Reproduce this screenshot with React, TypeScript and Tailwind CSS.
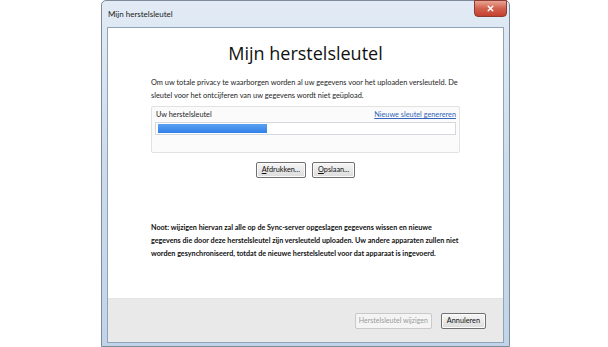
import { X } from 'lucide-react';

const font = { fontFamily: 'Lato, "Open Sans", sans-serif' };

function WinButton({ children, disabled = false }: { children: React.ReactNode; disabled?: boolean }) {
  return (
    <button
      type="button"
      className={
        disabled
          ? 'h-[16px] rounded-[2px] border border-[#c9c9c9] bg-[#f4f4f4] px-[3px] text-[7px] leading-none text-[#9a9a9a]'
          : 'h-[16px] rounded-[2px] border border-[#707070] bg-gradient-to-b from-[#f6f6f6] to-[#dcdcdc] px-[5px] text-[7.3px] leading-none text-[#111] shadow-[inset_0_0_0_1px_#fbfbfb]'
      }
    >
      {children}
    </button>
  );
}

export default function App() {
  return (
    <div className="h-[347px] w-[608px] bg-white" style={font}>
      <div className="ml-[101px] flex h-[347px] w-[409px] flex-col rounded-t-[5px] border border-[#7d8a99] bg-gradient-to-b from-[#e2ebf5] via-[#cbdbeb] to-[#c2d4e8] px-[5px] pb-[3px]">
        <div className="relative flex h-[26px] shrink-0 items-center">
          <span className="pl-[1px] text-[8px] text-[#1a1a1a]">Mijn herstelsleutel</span>
          <div className="absolute right-[-3px] top-[-1px] flex h-[17px] w-[33px] items-center justify-center rounded-b-[4px] border border-[#8d3b34] bg-gradient-to-b from-[#e8a493] via-[#d2604e] to-[#c4402f]">
            <X size={9} strokeWidth={4} className="text-white" />
          </div>
        </div>

        <div className="flex flex-1 flex-col border border-[#8fa3b9] bg-white">
          <div className="flex flex-1 flex-col px-[43px]">
            <h1
              className="mt-[9px] text-center text-[18px] font-normal leading-[32px] text-[#111]"
              style={{ fontFamily: '"Open Sans", sans-serif' }}
            >
              Mijn herstelsleutel
            </h1>
            <p className="mt-[7px] text-[7.4px] leading-[13px] text-[#1e1e1e]">
              Om uw totale privacy te waarborgen worden al uw gegevens voor het uploaden versleuteld. De sleutel
              voor het ontcijferen van uw gegevens wordt niet geüpload.
            </p>

            <div className="mt-[4px] h-[47px] rounded-[2px] border border-[#e2e2e2] bg-[#fbfbfb] px-[3px]">
              <div className="flex items-center justify-between pt-[1px] text-[7.3px] leading-[14px]">
                <span className="pl-[1px] text-[#1e1e1e]">Uw herstelsleutel</span>
                <span className="text-[#3465b8] underline">Nieuwe sleutel genereren</span>
              </div>
              <div className="flex h-[13px] items-center border border-[#d5d9de] bg-white px-[2px]">
                <div className="h-[9px] w-[109px] bg-gradient-to-b from-[#5aa2f2] to-[#2f7fe6]" />
              </div>
            </div>

            <div className="mt-[9px] flex justify-center gap-[6px]">
              <WinButton>
                <span className="underline">A</span>fdrukken...
              </WinButton>
              <WinButton>
                <span className="underline">O</span>pslaan...
              </WinButton>
            </div>

            <p className="mt-[43px] whitespace-nowrap text-[7.2px] font-bold leading-[13px] text-[#111]">
              Noot: wijzigen hiervan zal alle op de Sync-server opgeslagen gegevens wissen en nieuwe
              <br />
              gegevens die door deze herstelsleutel zijn versleuteld uploaden. Uw andere apparaten zullen niet
              <br />
              worden gesynchroniseerd, totdat de nieuwe herstelsleutel voor dat apparaat is ingevoerd.
            </p>
          </div>

          <div className="flex h-[44px] shrink-0 items-center justify-end gap-[9px] border-t border-[#e4e4e4] bg-[#e9e9e9] pr-[17px]">
            <WinButton disabled>Herstelsleutel wijzigen</WinButton>
            <WinButton>Annuleren</WinButton>
          </div>
        </div>
      </div>
    </div>
  );
}
